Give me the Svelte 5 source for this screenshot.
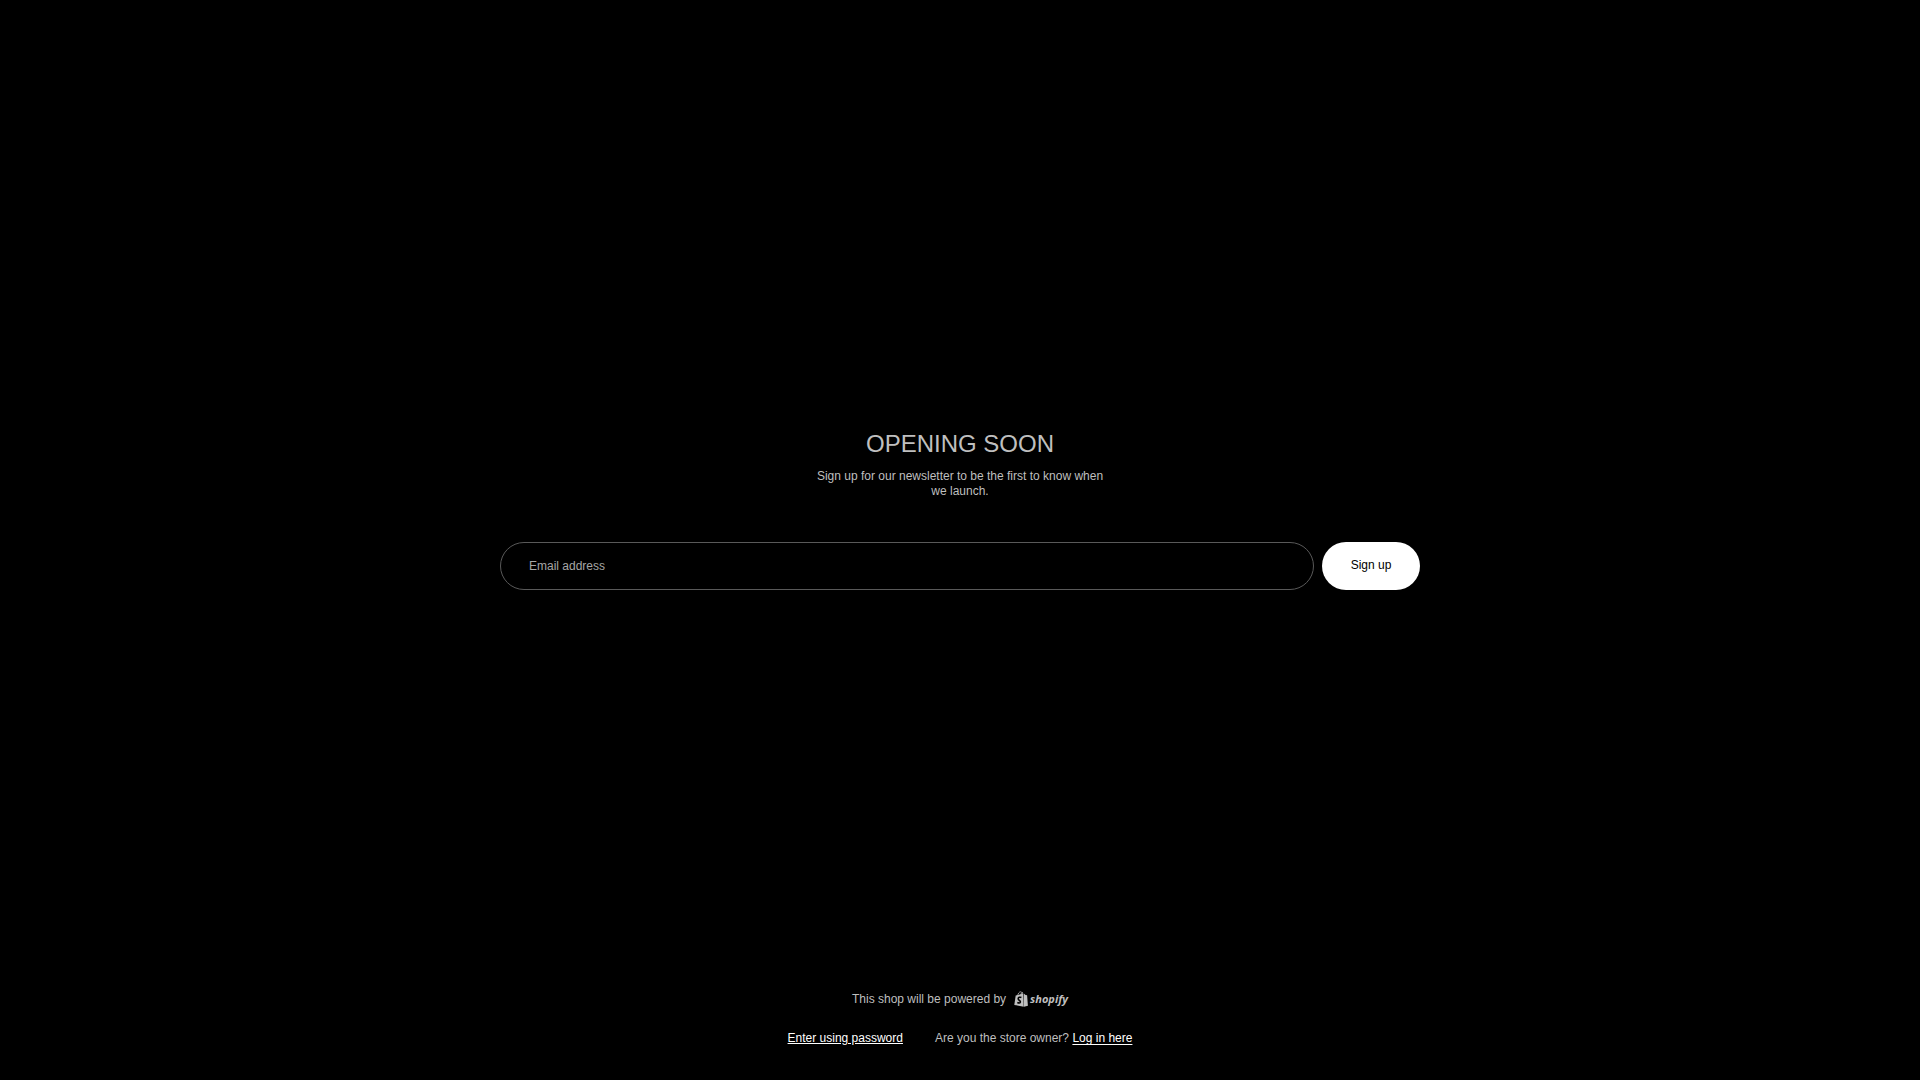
<script>
	let email = '';

	const subscribe = () => {
		email = '';
	};
</script>

<svelte:head>
	<title>Opening soon</title>
</svelte:head>

<div class="page">
	<main class="content">
		<h1 class="title">OPENING SOON</h1>
		<p class="message">Sign up for our newsletter to be the first to know when we launch.</p>
		<form class="newsletter" on:submit|preventDefault={subscribe}>
			<input
				class="field"
				type="email"
				aria-label="Email address"
				placeholder="Email address"
				autocomplete="email"
				bind:value={email}
			/>
			<button class="submit" type="submit">Sign up</button>
		</form>
	</main>

	<footer class="footer">
		<div class="powered">
			<span>This shop will be powered by</span>
			<a class="brand" href="https://www.shopify.com">
				<svg class="bag" viewBox="0 0 14 16" aria-hidden="true">
					<path
						class="strap"
						d="M3.6 5C3.9 2.6 5.2.8 6.7.8c1.2 0 1.7 1.2 1.8 3M6.6 4.2C6.9 2.4 7.8 1.4 9 1.7"
					/>
					<path class="front" d="M1.7 4.6 9.4 2.5l.3 13.2L.3 13.9z" />
					<path class="side" d="m10 2.7 1.6 1.2 1.5.4.8 10.5-3.9 1z" />
					<path
						class="letter"
						d="M7.4 6.5c-1.4-.7-3.2-.1-3.2 1.3 0 1.6 2.3 1.7 2.2 3.2-.1 1.2-1.8 1.3-3 .3"
					/>
				</svg>
				<span class="wordmark">shopify</span>
			</a>
		</div>
		<div class="links">
			<a class="password" href="#password">Enter using password</a>
			<p class="owner">Are you the store owner? <a class="login" href="#login">Log in here</a></p>
		</div>
	</footer>
</div>

<style>
	:global(body) {
		margin: 0;
		background: #000;
	}
	.page {
		display: flex;
		flex-direction: column;
		min-height: 100vh;
		box-sizing: border-box;
		padding: 27px 20px 34px;
		color: #bfbfbf;
		font-family: 'Liberation Sans', Arial, sans-serif;
		font-size: 12px;
		line-height: 15px;
	}
	.content {
		flex: 1;
		display: flex;
		flex-direction: column;
		align-items: center;
		justify-content: center;
	}
	.title {
		margin: 0 0 10px;
		font-size: 24px;
		font-weight: 400;
		line-height: 30px;
		text-align: center;
	}
	.message {
		max-width: 300px;
		margin: 0 0 43px;
		text-align: center;
	}
	.newsletter {
		display: flex;
		gap: 8px;
		width: 100%;
		max-width: 920px;
	}
	.field {
		flex: 1;
		min-width: 0;
		height: 48px;
		box-sizing: border-box;
		padding: 0 28px;
		border: 1px solid #595959;
		border-radius: 24px;
		background: transparent;
		color: #bfbfbf;
		font: inherit;
	}
	.field::placeholder {
		color: #a6a6a6;
		opacity: 1;
	}
	.field:focus {
		outline: none;
		border-color: #fff;
	}
	.submit {
		min-width: 98px;
		height: 48px;
		padding: 0 28px;
		border: 0;
		border-radius: 24px;
		background: #fff;
		color: #000;
		font: inherit;
		cursor: pointer;
	}
	.footer {
		display: flex;
		flex-direction: column;
		align-items: center;
		gap: 24px;
	}
	.powered {
		display: flex;
		align-items: center;
		gap: 8px;
	}
	.brand {
		display: flex;
		gap: 2px;
		height: 16px;
		color: #bfbfbf;
		text-decoration: none;
	}
	.bag {
		width: 14px;
		height: 16px;
	}
	.front,
	.side {
		fill: #bfbfbf;
	}
	.strap {
		fill: none;
		stroke: #bfbfbf;
		stroke-width: 0.8;
	}
	.letter {
		fill: none;
		stroke: #000;
		stroke-width: 1.6;
	}
	.wordmark {
		font-family: 'Open Sans', sans-serif;
		font-size: 11px;
		font-style: italic;
		font-weight: 700;
	}
	.links {
		display: flex;
		flex-wrap: wrap;
		justify-content: center;
		gap: 16px 32px;
	}
	.owner {
		margin: 0;
	}
	.password,
	.login {
		color: #fff;
	}
	.login {
		text-decoration-skip-ink: none;
		text-underline-offset: 2px;
	}
</style>
